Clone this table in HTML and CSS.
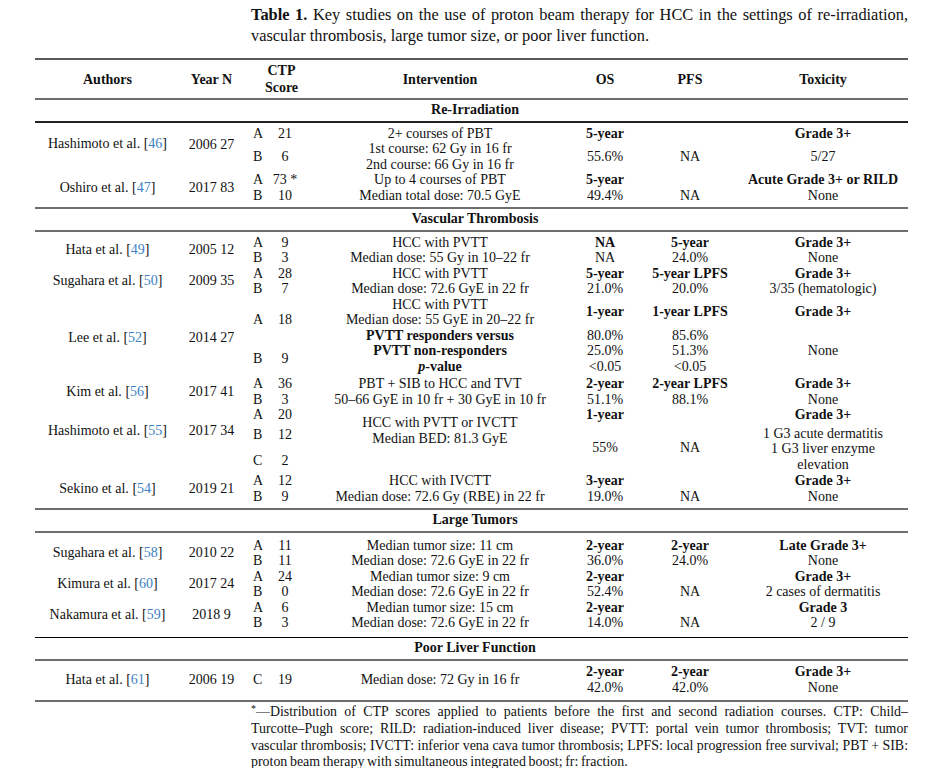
FILE: index.html
```html
<!DOCTYPE html>
<html>
<head>
<meta charset="utf-8">
<link rel="stylesheet" href="styles.css">
</head>
<body>
<p class="caption"><b>Table 1.</b> Key studies on the use of proton beam therapy for HCC in the settings of re-irradiation, vascular thrombosis, large tumor size, or poor liver function.</p>

<div class="tbl">
  <div class="grid head">
    <div>Authors</div>
    <div>Year N</div>
    <div>CTP<br>Score</div>
    <div>Intervention</div>
    <div>OS</div>
    <div>PFS</div>
    <div class="tox">Toxicity</div>
  </div>

  <div class="sect dark">Re-Irradiation</div>
  <div class="group">
    <div class="grid row">
      <div class="c mid pb10"><div>Hashimoto et al. <span class="cite">[<span>46</span>]</span></div></div>
      <div class="c mid pb9">2006 27</div>
      <div class="c"><div class="ctp l"><span class="g">A</span><span class="n">21</span></div><div class="fill"><div class="ctp"><span class="g">B</span><span class="n">6</span></div></div></div>
      <div class="c"><div class="l">2+ courses of PBT</div><div class="l">1st course: 62 Gy in 16 fr</div><div class="l">2nd course: 66 Gy in 16 fr</div></div>
      <div class="c"><div class="l b">5-year</div><div class="fill">55.6%</div></div>
      <div class="c"><div class="l"></div><div class="fill">NA</div></div>
      <div class="c tox"><div class="l b">Grade 3+</div><div class="fill">5/27</div></div>
    </div>
    <div class="grid row">
      <div class="c mid"><div>Oshiro et al. <span class="cite">[<span>47</span>]</span></div></div>
      <div class="c mid">2017 83</div>
      <div class="c"><div class="ctp l"><span class="g">A</span><span class="n">73 *</span></div><div class="ctp l"><span class="g">B</span><span class="n">10</span></div></div>
      <div class="c"><div class="l">Up to 4 courses of PBT</div><div class="l">Median total dose: 70.5 GyE</div></div>
      <div class="c"><div class="l b">5-year</div><div class="l">49.4%</div></div>
      <div class="c"><div class="l"></div><div class="l">NA</div></div>
      <div class="c tox"><div class="l b">Acute Grade 3+ or RILD</div><div class="l">None</div></div>
    </div>
  </div>

  <div class="sect">Vascular Thrombosis</div>
  <div class="group">
    <div class="grid row">
      <div class="c mid"><div>Hata et al. <span class="cite">[<span>49</span>]</span></div></div>
      <div class="c mid">2005 12</div>
      <div class="c"><div class="ctp l"><span class="g">A</span><span class="n">9</span></div><div class="ctp l"><span class="g">B</span><span class="n">3</span></div></div>
      <div class="c"><div class="l">HCC with PVTT</div><div class="l">Median dose: 55 Gy in 10–22 fr</div></div>
      <div class="c"><div class="l b">NA</div><div class="l">NA</div></div>
      <div class="c"><div class="l b">5-year</div><div class="l">24.0%</div></div>
      <div class="c tox"><div class="l b">Grade 3+</div><div class="l">None</div></div>
    </div>
    <div class="grid row">
      <div class="c mid"><div>Sugahara et al. <span class="cite">[<span>50</span>]</span></div></div>
      <div class="c mid">2009 35</div>
      <div class="c"><div class="ctp l"><span class="g">A</span><span class="n">28</span></div><div class="ctp l"><span class="g">B</span><span class="n">7</span></div></div>
      <div class="c"><div class="l">HCC with PVTT</div><div class="l">Median dose: 72.6 GyE in 22 fr</div></div>
      <div class="c"><div class="l b">5-year</div><div class="l">21.0%</div></div>
      <div class="c"><div class="l b">5-year LPFS</div><div class="l">20.0%</div></div>
      <div class="c tox"><div class="l b">Grade 3+</div><div class="l">3/35 (hematologic)</div></div>
    </div>
    <div class="grid row lee">
      <div class="c mid pt4"><div>Lee et al. <span class="cite">[<span>52</span>]</span></div></div>
      <div class="c mid pt4">2014 27</div>
      <div class="c"><div class="h3 ctp"><span class="g">A</span><span class="n">18</span></div><div class="fill"><div class="ctp"><span class="g">B</span><span class="n">9</span></div></div></div>
      <div class="c"><div class="l">HCC with PVTT</div><div class="l">Median dose: 55 GyE in 20–22 fr</div><div class="l b">PVTT responders versus</div><div class="l b">PVTT non-responders</div><div class="l b"><i>p</i>-value</div></div>
      <div class="c"><div class="h2 b">1-year</div><div class="l">80.0%</div><div class="l">25.0%</div><div class="l">&lt;0.05</div></div>
      <div class="c"><div class="h2 b">1-year LPFS</div><div class="l">85.6%</div><div class="l">51.3%</div><div class="l">&lt;0.05</div></div>
      <div class="c tox"><div class="h2 b">Grade 3+</div><div class="fill">None</div></div>
    </div>
    <div class="grid row">
      <div class="c mid"><div>Kim et al. <span class="cite">[<span>56</span>]</span></div></div>
      <div class="c mid">2017 41</div>
      <div class="c"><div class="ctp l"><span class="g">A</span><span class="n">36</span></div><div class="ctp l"><span class="g">B</span><span class="n">3</span></div></div>
      <div class="c"><div class="l">PBT + SIB to HCC and TVT</div><div class="l">50–66 GyE in 10 fr + 30 GyE in 10 fr</div></div>
      <div class="c"><div class="l b">2-year</div><div class="l">51.1%</div></div>
      <div class="c"><div class="l b">2-year LPFS</div><div class="l">88.1%</div></div>
      <div class="c tox"><div class="l b">Grade 3+</div><div class="l">None</div></div>
    </div>
    <div class="grid row tall">
      <div class="c mid pb18"><div>Hashimoto et al. <span class="cite">[<span>55</span>]</span></div></div>
      <div class="c mid pb18">2017 34</div>
      <div class="c"><div class="ctp l"><span class="g">A</span><span class="n">20</span></div><div class="fill split"><div class="ctp"><span class="g">B</span><span class="n">12</span></div><div class="ctp"><span class="g">C</span><span class="n">2</span></div></div></div>
      <div class="c pt8"><div class="l">HCC with PVTT or IVCTT</div><div class="l">Median BED: 81.3 GyE</div></div>
      <div class="c"><div class="l b">1-year</div><div class="fill">55%</div></div>
      <div class="c"><div class="l"></div><div class="fill">NA</div></div>
      <div class="c tox"><div class="l b">Grade 3+</div><div class="fill pt2"><div class="l">1 G3 acute dermatitis</div><div class="l">1 G3 liver enzyme</div><div class="l">elevation</div></div></div>
    </div>
    <div class="grid row">
      <div class="c mid"><div>Sekino et al. <span class="cite">[<span>54</span>]</span></div></div>
      <div class="c mid">2019 21</div>
      <div class="c"><div class="ctp l"><span class="g">A</span><span class="n">12</span></div><div class="ctp l"><span class="g">B</span><span class="n">9</span></div></div>
      <div class="c"><div class="l">HCC with IVCTT</div><div class="l">Median dose: 72.6 Gy (RBE) in 22 fr</div></div>
      <div class="c"><div class="l b">3-year</div><div class="l">19.0%</div></div>
      <div class="c"><div class="l"></div><div class="l">NA</div></div>
      <div class="c tox"><div class="l b">Grade 3+</div><div class="l">None</div></div>
    </div>
  </div>

  <div class="sect">Large Tumors</div>
  <div class="group large">
    <div class="grid row">
      <div class="c mid"><div>Sugahara et al. <span class="cite">[<span>58</span>]</span></div></div>
      <div class="c mid">2010 22</div>
      <div class="c"><div class="ctp l"><span class="g">A</span><span class="n">11</span></div><div class="ctp l"><span class="g">B</span><span class="n">11</span></div></div>
      <div class="c"><div class="l">Median tumor size: 11 cm</div><div class="l">Median dose: 72.6 GyE in 22 fr</div></div>
      <div class="c"><div class="l b">2-year</div><div class="l">36.0%</div></div>
      <div class="c"><div class="l b">2-year</div><div class="l">24.0%</div></div>
      <div class="c tox"><div class="l b">Late Grade 3+</div><div class="l">None</div></div>
    </div>
    <div class="grid row">
      <div class="c mid"><div>Kimura et al. <span class="cite">[<span>60</span>]</span></div></div>
      <div class="c mid">2017 24</div>
      <div class="c"><div class="ctp l"><span class="g">A</span><span class="n">24</span></div><div class="ctp l"><span class="g">B</span><span class="n">0</span></div></div>
      <div class="c"><div class="l">Median tumor size: 9 cm</div><div class="l">Median dose: 72.6 GyE in 22 fr</div></div>
      <div class="c"><div class="l b">2-year</div><div class="l">52.4%</div></div>
      <div class="c"><div class="l"></div><div class="l">NA</div></div>
      <div class="c tox"><div class="l b">Grade 3+</div><div class="l">2 cases of dermatitis</div></div>
    </div>
    <div class="grid row">
      <div class="c mid"><div>Nakamura et al. <span class="cite">[<span>59</span>]</span></div></div>
      <div class="c mid">2018 9</div>
      <div class="c"><div class="ctp l"><span class="g">A</span><span class="n">6</span></div><div class="ctp l"><span class="g">B</span><span class="n">3</span></div></div>
      <div class="c"><div class="l">Median tumor size: 15 cm</div><div class="l">Median dose: 72.6 GyE in 22 fr</div></div>
      <div class="c"><div class="l b">2-year</div><div class="l">14.0%</div></div>
      <div class="c"><div class="l"></div><div class="l">NA</div></div>
      <div class="c tox"><div class="l b">Grade 3</div><div class="l">2 / 9</div></div>
    </div>
  </div>

  <div class="sect">Poor Liver Function</div>
  <div class="group poor">
    <div class="grid row">
      <div class="c mid"><div>Hata et al. <span class="cite">[<span>61</span>]</span></div></div>
      <div class="c mid">2006 19</div>
      <div class="c mid"><div class="ctp"><span class="g">C</span><span class="n">19</span></div></div>
      <div class="c mid">Median dose: 72 Gy in 16 fr</div>
      <div class="c"><div class="l b">2-year</div><div class="l">42.0%</div></div>
      <div class="c"><div class="l b">2-year</div><div class="l">42.0%</div></div>
      <div class="c tox"><div class="l b">Grade 3+</div><div class="l">None</div></div>
    </div>
  </div>
</div>

<div class="foot">
  <span class="ln"><span class="ast">*</span>—Distribution of CTP scores applied to patients before the first and second radiation courses. CTP: Child–</span>
  <span class="ln">Turcotte–Pugh score; RILD: radiation-induced liver disease; PVTT: portal vein tumor thrombosis; TVT: tumor</span>
  <span class="ln">vascular thrombosis; IVCTT: inferior vena cava tumor thrombosis; LPFS: local progression free survival; PBT + SIB:</span>
  <span class="ln last">proton beam therapy with simultaneous integrated boost; fr: fraction.</span>
</div>
</body>
</html>
```
FILE: styles.css
```css
body {
  margin: 0;
  width: 925px;
  background: #fff;
  color: #111;
  font-family: "Liberation Serif", "Times New Roman", serif;
}

.caption {
  margin: 4px 17px 0 251px;
  font-size: 16.4px;
  line-height: 21px;
  text-align: justify;
}

.tbl {
  margin: 12px 17px 0 35px;
  font-size: 14px;
  line-height: 15.5px;
}

.grid {
  display: grid;
  grid-template-columns: 145px 63px 77px 240px 90px 80px 178px;
  text-align: center;
}

.head {
  height: 38px;
  border-top: 2px solid #5a5a5a;
  border-bottom: 2px solid #6e6e6e;
  align-items: center;
  font-weight: bold;
  line-height: 17px;
}

.tox {
  padding-left: 8px;
}

.sect {
  line-height: 20px;
  padding: 0 0 1px 7px;
  border-bottom: 2px solid #6e6e6e;
  font-weight: bold;
  text-align: center;
}

.sect.dark {
  border-bottom-color: #222;
}

.group {
  padding: 2.5px 0 4px;
  border-bottom: 2px solid #6e6e6e;
}

.group.large {
  padding: 4.5px 0 6px;
  border-bottom: 1px solid #000;
}

.group.poor {
  padding: 3.5px 0 5px;
}

.lee {
  padding-bottom: 2px;
}

.c {
  display: flex;
  flex-direction: column;
}

.mid {
  justify-content: center;
}

.l {
  height: 15.5px;
  white-space: nowrap;
}

.h2 {
  height: 31px;
  display: flex;
  align-items: center;
  justify-content: center;
}

.h3 {
  height: 46.5px;
}

.fill {
  flex: 1;
  display: flex;
  flex-direction: column;
  justify-content: center;
}

.split > .ctp {
  flex: 1;
}

.ctp {
  display: flex;
  align-items: center;
  padding-left: 10px;
  text-align: left;
}

.ctp .g {
  width: 12px;
}

.ctp .n {
  width: 40px;
  text-align: center;
  white-space: nowrap;
}

.tall {
  height: 66px;
}

.b {
  font-weight: bold;
}

.pb9 { padding-bottom: 9px; }
.pb10 { padding-bottom: 10px; }
.pb18 { padding-bottom: 18px; }
.pt2 { padding-top: 2px; }
.pt4 { padding-top: 4px; }
.pt8 { padding-top: 8px; }

.cite span {
  color: #3b7fc4;
}

.foot {
  margin: 2px 17px 0 251px;
  font-size: 13.9px;
  word-spacing: -0.8px;
  line-height: 16.8px;
}

.foot .ln {
  display: block;
  white-space: nowrap;
  text-align: justify;
  text-align-last: justify;
}

.foot .ln.last {
  text-align-last: left;
}

.foot .ast {
  font-size: 10px;
  vertical-align: 4px;
  line-height: 10px;
}
```
